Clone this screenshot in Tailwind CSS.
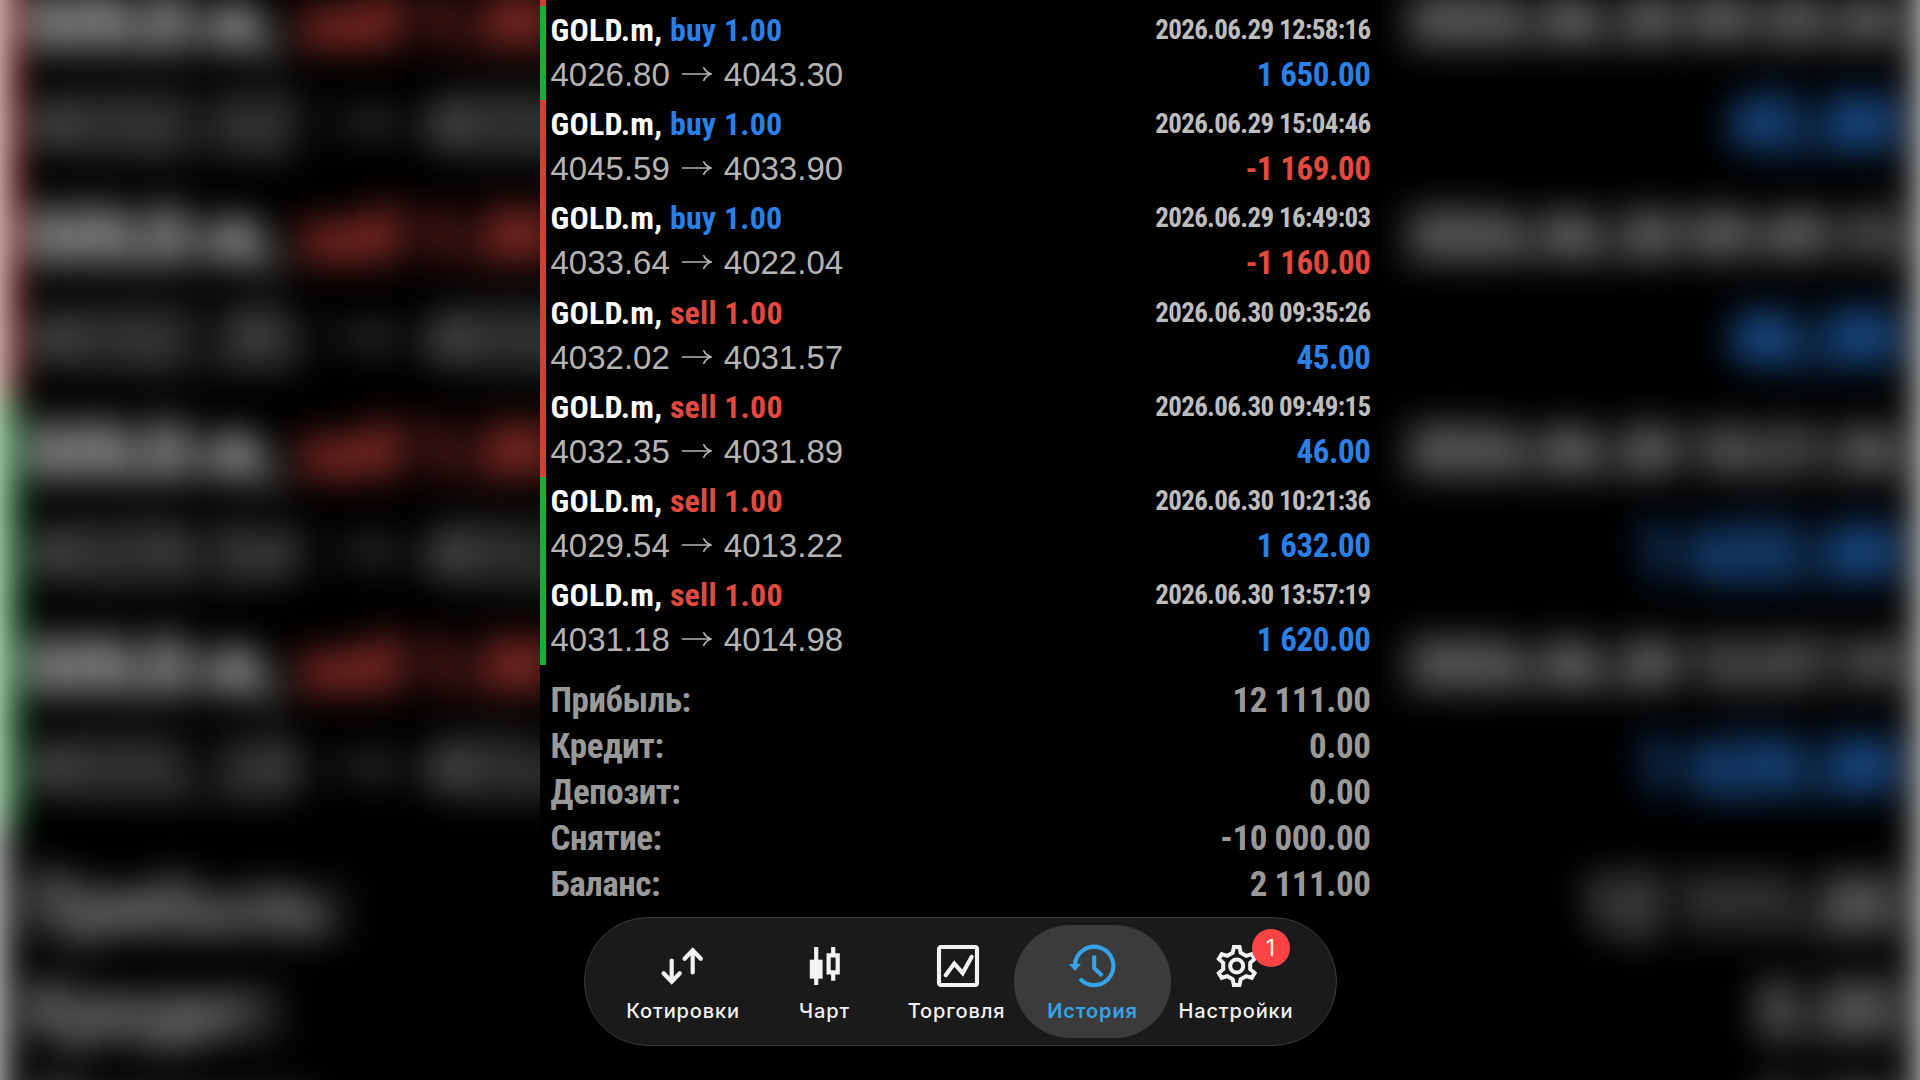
<!DOCTYPE html>
<html lang="ru">
<head>
    <meta charset="UTF-8">
    <meta name="viewport" content="width=device-width, initial-scale=1.0">
    <title>История</title>
    <script src="https://cdn.jsdelivr.net/npm/@tailwindcss/browser@4"></script>
</head>
<body class="bg-black h-screen overflow-hidden">
    <div class="relative flex justify-center w-[1920px] h-[1080px] overflow-hidden">
        <!-- Blurred, enlarged copy of the panel -->
        <div id="backdrop" aria-hidden="true" class="absolute -inset-24 flex items-center justify-center overflow-hidden bg-white blur-[19px]"></div>

        <main id="panel" class="relative w-[841px] h-[1080px] shrink-0 overflow-hidden bg-black font-['Roboto','Liberation_Sans',sans-serif]">
            <div class="h-1.5 w-1.5 bg-[#d24033]"></div>
            <section id="deals"></section>

            <section class="mt-[12.4px] pl-[11px] pr-2.5 text-[35px] leading-[46px] font-bold font-stretch-condensed tracking-[-0.45px] text-[#999999]">
                <div class="flex justify-between"><span>Прибыль:</span><span>12 111.00</span></div>
                <div class="flex justify-between"><span>Кредит:</span><span>0.00</span></div>
                <div class="flex justify-between"><span>Депозит:</span><span>0.00</span></div>
                <div class="flex justify-between"><span>Снятие:</span><span>-10 000.00</span></div>
                <div class="flex justify-between"><span>Баланс:</span><span>2 111.00</span></div>
            </section>

            <nav class="mt-[9.2px] ml-11 mr-[43.5px] h-[129px] pl-[27.5px] flex items-center rounded-[64px] border border-[#3a3a3a] bg-[#1a1a1a] text-[#f2f2f2] font-['Inter',sans-serif] font-medium text-[20px] leading-6 tracking-[0.85px]">
                <a class="w-[142px] pt-[3px] flex flex-col items-center gap-[9px]">
                    <svg class="size-12" viewBox="0 0 48 48" fill="none" stroke="currentColor" stroke-width="4.2" stroke-linecap="round" stroke-linejoin="round">
                        <path d="M12.7 18.5V39"/>
                        <path d="M4.6 31.2l8.1 8.6 8.1-8.6" stroke-linejoin="miter"/>
                        <path d="M33.7 30.5V9"/>
                        <path d="M25.6 16.8l8.1-8.6 8.1 8.6" stroke-linejoin="miter"/>
                    </svg>
                    <span>Котировки</span>
                </a>
                <a class="w-[141px] pt-[3px] flex flex-col items-center gap-[9px]">
                    <svg class="size-12" viewBox="0 0 48 48" fill="none" stroke="currentColor" stroke-width="4.2">
                        <path d="M15.2 5v38M32.2 5v7M32.2 32v6.8"/>
                        <path d="M8.8 17.7h12.8v19H8.8z" fill="currentColor" stroke="none"/>
                        <path d="M27.6 13.4h9.1v16.9h-9.1z"/>
                    </svg>
                    <span>Чарт</span>
                </a>
                <a class="ml-1 w-[115px] pt-[3px] flex flex-col items-center gap-[9px]">
                    <svg class="size-12" viewBox="0 0 48 48" fill="none" stroke="currentColor" stroke-width="4.1" stroke-linecap="round">
                        <rect x="6" y="5" width="38" height="38" rx="2"/>
                        <path d="M12.7 33.2l8.6-11.6 8.4 9.5 9-16.3"/>
                    </svg>
                    <span>Торговля</span>
                </a>
                <a class="w-[157px] h-[113px] pt-[3px] flex flex-col items-center justify-center gap-[9px] rounded-[56px] bg-[#3b3b3b] text-[#36a3ea] font-semibold">
                    <svg class="size-12" viewBox="0 0 48 48" fill="none" stroke="currentColor" stroke-width="4.1">
                        <path d="M6 23.5A19.2 19.2 0 1 1 11 36.8"/>
                        <path d="M0 22h12l-6 7z" fill="currentColor" stroke="none"/>
                        <path d="M25.2 13.6v12.6l8 7.6"/>
                    </svg>
                    <span>История</span>
                </a>
                <a class="relative w-[130px] pt-[3px] flex flex-col items-center gap-[9px]">
                    <svg class="size-12" viewBox="-24.7 -24 48 48" fill="none" stroke="currentColor" stroke-width="4">
                        <path d="M-4-13.3L-2.8-19H2.8L4-13.3 9.5-10.1 15-11.9 17.9-7.1 13.5-3.2V3.2L17.9 7.1 15 11.9 9.5 10.1 4 13.3 2.8 19H-2.8L-4 13.3-9.5 10.1-15 11.9-17.9 7.1-13.5 3.2V-3.2L-17.9-7.1-15-11.9-9.5-10.1z"/>
                        <circle r="6.5"/>
                    </svg>
                    <span>Настройки</span>
                    <span class="absolute -top-2.5 left-[80.5px] size-[38px] rounded-full bg-[#fc4444] text-center text-[23px] leading-[38px] tracking-normal font-normal">1</span>
                </a>
            </nav>
        </main>
    </div>

    <script>
        const deals = [
            ['buy', '4026.80', '4043.30', '2026.06.29 12:58:16', '1 650.00', 'green'],
            ['buy', '4045.59', '4033.90', '2026.06.29 15:04:46', '-1 169.00', 'red'],
            ['buy', '4033.64', '4022.04', '2026.06.29 16:49:03', '-1 160.00', 'red'],
            ['sell', '4032.02', '4031.57', '2026.06.30 09:35:26', '45.00', 'red'],
            ['sell', '4032.35', '4031.89', '2026.06.30 09:49:15', '46.00', 'red'],
            ['sell', '4029.54', '4013.22', '2026.06.30 10:21:36', '1 632.00', 'green'],
            ['sell', '4031.18', '4014.98', '2026.06.30 13:57:19', '1 620.00', 'green'],
        ];
        const bar = { green: 'border-[#1aae34]', red: 'border-[#d24033]' };
        const side = { buy: 'text-[#2a80e8]', sell: 'text-[#e2493f]' };

        document.getElementById('deals').innerHTML = deals.map(([type, open, close, time, profit, mark]) => `
            <div class="h-[94.2px] pt-[3px] pl-[5px] pr-2.5 border-l-6 ${bar[mark]} font-bold font-stretch-condensed whitespace-nowrap">
                <div class="flex justify-between h-11">
                    <span class="text-[32px] leading-[42px] tracking-[0.2px] text-white">GOLD.m, <span class="${side[type]}">${type} 1.00</span></span>
                    <span class="text-[27px] leading-[42px] tracking-[-0.65px] text-[#bdbdbd]">${time}</span>
                </div>
                <div class="flex justify-between h-11">
                    <span class="flex items-center font-['Liberation_Sans',sans-serif] font-normal font-stretch-normal text-[33px] leading-11 text-[#b4b4b4]">
                        ${open}
                        <svg class="ml-3 mr-3 w-[30px] h-4" viewBox="0 0 30 16" fill="none" stroke="currentColor" stroke-width="1.7"><path d="M0 7h29M21.5 .2Q23.5 5 29 7 23.5 9 21.5 13.8"/></svg>
                        ${close}
                    </span>
                    <span class="text-[33px] leading-11 tracking-[-0.45px] ${profit[0] === '-' ? 'text-[#e2493f]' : 'text-[#2a80e8]'}">${profit}</span>
                </div>
            </div>`).join('');

        const copy = document.getElementById('panel').cloneNode(true);
        copy.removeAttribute('id');
        copy.classList.add('scale-[2.283]');
        document.getElementById('backdrop').append(copy);
    </script>
</body>
</html>
